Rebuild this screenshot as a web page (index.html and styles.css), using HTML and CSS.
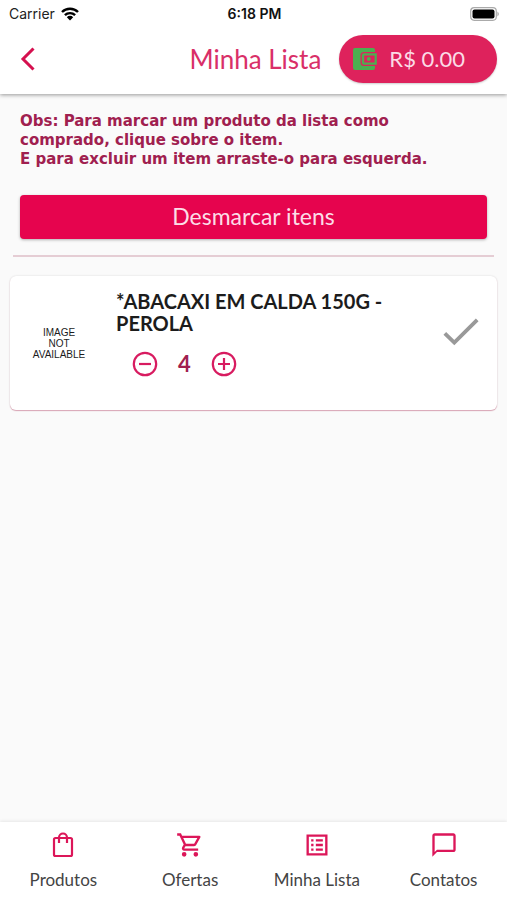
FILE: index.html
```html
<!DOCTYPE html>
<html lang="pt-BR">
<head>
<meta charset="utf-8">
<meta name="viewport" content="width=device-width, initial-scale=1">
<title>Minha Lista</title>
<link rel="stylesheet" href="styles.css">
</head>
<body>
<header class="top">
  <div class="status">
    <div class="carrier">Carrier
      <svg class="wifi" viewBox="0 0 18 14" aria-hidden="true"><g fill="none" stroke="#000" stroke-width="2.4"><path d="M1 5a11.3 11.3 0 0 1 16 0"/><path d="M3.9 8.2a7.2 7.2 0 0 1 10.2 0"/></g><path d="M5.800 10.200a4.500 4.500 0 0 1 6.400 0L9 13.600z"/></svg>
    </div>
    <div class="time">6:18 PM</div>
    <svg class="battery" viewBox="0 0 30 14" aria-hidden="true"><rect x=".7" y=".7" width="25.600" height="12.600" rx="3.500" fill="#fff" stroke="#aaa" stroke-width="1.200"/><rect x="2.500" y="2.500" width="22" height="9" rx="2"/><path d="M27.500 4.500q2.500 2.500 0 5z" fill="#999"/></svg>
  </div>
  <div class="appbar">
    <button class="icon-button back" aria-label="Voltar"><svg viewBox="0 0 16 24"><path d="M13.500 1.500 3 12l10.500 10.500" fill="none" stroke="currentColor" stroke-width="3"/></svg></button>
    <h1>Minha Lista</h1>
    <button class="wallet">
      <svg viewBox="0 0 24 22" aria-hidden="true"><path fill="#4caf50" d="M2 0H20Q22 0 22 2V4H11Q7.500 4 7.500 7.500V14.500Q7.500 18 11 18H22V20Q22 22 20 22H2Q0 22 0 20V2Q0 0 2 0Z"/><path fill="#4caf50" fill-rule="evenodd" d="M11 5.200H23.800V16.800H11Q8.800 16.800 8.800 14.600V7.400Q8.800 5.200 11 5.200ZM11.200 7.400V14.600H21.600V7.400Z"/><circle cx="15.800" cy="11" r="2" fill="#4caf50"/></svg>
      <span>R$ 0.00</span>
    </button>
  </div>
</header>
<main>
  <p class="note">Obs: Para marcar um produto da lista como<br>comprado, clique sobre o item.<br>E para excluir um item arraste-o para esquerda.</p>
  <button class="clear">Desmarcar itens</button>
  <hr>
  <article class="card">
    <div class="thumb">IMAGE<br>NOT<br>AVAILABLE</div>
    <div class="details">
      <h2>*ABACAXI EM CALDA 150G -<br>PEROLA</h2>
      <div class="stepper">
        <button class="icon-button" aria-label="Diminuir"><svg viewBox="0 0 26 26"><circle cx="13" cy="13" r="11.200"/><path d="M7 13h12"/></svg></button>
        <output>4</output>
        <button class="icon-button" aria-label="Aumentar"><svg viewBox="0 0 26 26"><circle cx="13" cy="13" r="11.200"/><path d="M7 13h12M13 7v12"/></svg></button>
      </div>
    </div>
    <button class="icon-button check" aria-label="Marcar como comprado"><svg viewBox="0 0 36 28"><path d="M1.800 15.300 11.300 24.600 34.200 1.800" fill="none" stroke="#999" stroke-width="3.800"/></svg></button>
  </article>
</main>
<nav>
  <a href="#produtos"><svg viewBox="0 0 28 28"><g fill="none" stroke="currentColor" stroke-width="2.200"><rect x="5" y="7" width="18" height="18" rx="1.500"/><path d="M10 12V6.500a4 4 0 0 1 8 0V12"/></g></svg>Produtos</a>
  <a href="#ofertas"><svg viewBox="0 0 24 24"><path fill="currentColor" d="M15.550 13c.75 0 1.410-.41 1.750-1.030l3.580-6.490A.996.996 0 0 0 20.010 4H5.210l-.94-2H1v2h2l3.600 7.590-1.350 2.440C4.520 15.370 5.480 17 7 17h12v-2H7l1.100-2h7.450zM6.160 6h12.150l-2.760 5H8.530L6.160 6zM7 18a2 2 0 1 0 0 4 2 2 0 0 0 0-4zm10 0a2 2 0 1 0 0 4 2 2 0 0 0 0-4z"/></svg>Ofertas</a>
  <a href="#lista"><svg viewBox="0 0 24 24"><path fill="currentColor" fill-rule="evenodd" d="M3 3h18v18H3zM5 5v14h14V5zM7 7h2v2H7zM7 11h2v2H7zM7 15h2v2H7zM11 7h6v2h-6zM11 11h6v2h-6zM11 15h6v2h-6z"/></svg>Minha Lista</a>
  <a href="#contatos"><svg viewBox="0 0 24 24"><path fill="currentColor" d="M20 2H4c-1.100 0-2 .9-2 2v18l4-4h14c1.100 0 2-.9 2-2V4c0-1.100-.9-2-2-2zm0 14H6l-2 2V4h16v12z"/></svg>Contatos</a>
</nav>
</body>
</html>
```
FILE: styles.css
```css
* { box-sizing: border-box; }
body {
  margin: 0;
  min-height: 100vh;
  display: flex;
  flex-direction: column;
  background: #fafafa;
  color: #1c1c1c;
  font-family: Lato, "Liberation Sans", sans-serif;
}
button { border: 0; padding: 0; font: inherit; cursor: pointer; }
svg { display: block; }
h1, h2, p { margin: 0; }
.top { background: #fff; box-shadow: 0 1px 4px rgba(0, 0, 0, .4); }
.status {
  display: grid;
  grid-template-columns: 1fr auto 1fr;
  align-items: center;
  height: 27px;
  padding: 0 7px 0 9px;
  font: 14px Inter, sans-serif;
  color: #222;
}
.carrier { display: flex; align-items: center; gap: 6px; }
.wifi { width: 18px; height: 14px; }
.time { font-weight: 600; color: #111; }
.battery { width: 30px; height: 14px; justify-self: end; }
.appbar {
  display: flex;
  align-items: center;
  gap: 18px;
  height: 67px;
  padding: 0 10px 3px 20px;
}
.icon-button { background: none; color: #d81b60; }
.back { color: #d5104f; margin-right: auto; }
.back svg { width: 16px; height: 24px; }
h1 { font-size: 26px; font-weight: 400; line-height: 32px; color: #d92f68; }
.wallet {
  display: flex;
  align-items: center;
  gap: 12px;
  height: 48px;
  padding: 0 32px 0 14px;
  border-radius: 24px;
  background: #de225c;
  color: #fbdbe6;
  font-size: 22px;
  line-height: 24px;
  box-shadow: 0 1px 2px rgba(0, 0, 0, .2);
}
.wallet svg { width: 24px; height: 22px; }
main { flex: 1; padding: 18px 10px; }
.note {
  padding: 0 10px;
  font-family: "DejaVu Sans", sans-serif;
  font-size: 15px;
  font-weight: 700;
  line-height: 19px;
  color: #a0204f;
}
.clear {
  display: block;
  width: calc(100% - 20px);
  height: 44px;
  margin: 26px 10px 16px;
  padding-bottom: 2px;
  border-radius: 4px;
  background: #e6044e;
  color: #fcdde7;
  font-size: 23px;
  box-shadow: 0 1px 3px rgba(0, 0, 0, .3);
}
hr { height: 2px; margin: 0 3px 19px; border: 0; background: #e5cdd4; }
.card {
  display: flex;
  min-height: 134px;
  padding: 14px 18px 14px 8px;
  border-radius: 6px;
  background: #fff;
  box-shadow: 0 1px 1px #d9a5b5, 0 0 2px rgba(0, 0, 0, .15);
}
.thumb {
  width: 82px;
  align-self: center;
  text-align: center;
  font: 10px/11px "Liberation Sans", sans-serif;
}
.details { flex: 1; margin-left: 16px; }
h2 { font-size: 20px; font-weight: 700; line-height: 22px; }
.stepper { display: flex; align-items: center; gap: 20px; margin: 17px 0 0 16px; }
.stepper svg { width: 26px; height: 26px; fill: none; stroke: currentColor; stroke-width: 2.2; }
output { font-size: 22px; font-weight: 700; line-height: 26px; color: #a0204f; }
.check { align-self: center; margin-bottom: 22px; }
.check svg { width: 36px; height: 28px; }
nav {
  display: grid;
  grid-template-columns: repeat(4, 1fr);
  height: 78px;
  padding-top: 9px;
  background: #fff;
  box-shadow: 0 -1px 3px rgba(0, 0, 0, .08);
}
nav a {
  display: flex;
  flex-direction: column;
  align-items: center;
  gap: 11px;
  color: #444;
  font-size: 17px;
  line-height: 20px;
  text-decoration: none;
}
nav svg { width: 28px; height: 28px; color: #dc1659; }
```
